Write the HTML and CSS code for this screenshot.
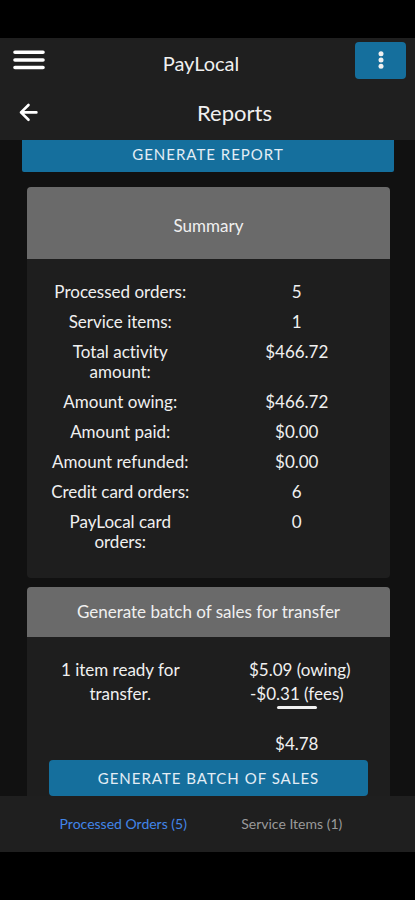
FILE: index.html
```html
<!DOCTYPE html>
<html lang="en">
<head>
<meta charset="utf-8">
<meta name="viewport" content="width=device-width, initial-scale=1">
<title>PayLocal Reports</title>
<link rel="stylesheet" href="styles.css">
</head>
<body>
<div class="app">
  <header class="header">
    <div class="bar">
      <button class="icon-button" type="button" aria-label="Menu">
        <svg width="32" height="20" viewBox="0 0 32 20" fill="none" stroke="currentColor" stroke-width="3.6" stroke-linecap="round"><path d="M2 2.3h28M2 10h28M2 17.5h28"/></svg>
      </button>
      <h1 class="brand">PayLocal</h1>
      <button class="more" type="button" aria-label="More options">
        <svg width="6" height="20" viewBox="0 0 6 20" fill="currentColor"><circle cx="3" cy="3.8" r="2.5"/><circle cx="3" cy="10" r="2.5"/><circle cx="3" cy="16.2" r="2.5"/></svg>
      </button>
    </div>
    <div class="bar page-bar">
      <button class="icon-button back" type="button" aria-label="Back">
        <svg width="20" height="20" viewBox="0 0 20 20" fill="none" stroke="currentColor" stroke-width="2.6" stroke-linecap="round" stroke-linejoin="round"><path d="M17.4 10.4H2M9.5 3 2 10.4l7.5 7.4"/></svg>
      </button>
      <h2 class="page-title">Reports</h2>
    </div>
  </header>

  <main class="content">
    <button class="button report-button" type="button">GENERATE REPORT</button>

    <section class="card">
      <h3 class="card-title tall">Summary</h3>
      <table class="summary">
        <tbody>
          <tr><th scope="row">Processed orders:</th><td>5</td></tr>
          <tr><th scope="row">Service items:</th><td>1</td></tr>
          <tr><th scope="row">Total activity amount:</th><td>$466.72</td></tr>
          <tr><th scope="row">Amount owing:</th><td>$466.72</td></tr>
          <tr><th scope="row">Amount paid:</th><td>$0.00</td></tr>
          <tr><th scope="row">Amount refunded:</th><td>$0.00</td></tr>
          <tr><th scope="row">Credit card orders:</th><td>6</td></tr>
          <tr><th scope="row">PayLocal card orders:</th><td>0</td></tr>
        </tbody>
      </table>
    </section>

    <section class="card">
      <h3 class="card-title">Generate batch of sales for transfer</h3>
      <div class="batch">
        <p class="ready">1 item ready for transfer.</p>
        <div class="amounts">
          <p class="owing">$5.09 (owing)</p>
          <p>-$0.31 (fees)</p>
          <hr class="rule">
          <p>$4.78</p>
        </div>
      </div>
      <button class="button batch-button" type="button">GENERATE BATCH OF SALES</button>
    </section>
  </main>

  <nav class="tabs">
    <a class="tab active" href="#orders">Processed Orders (5)</a>
    <a class="tab" href="#items">Service Items (1)</a>
  </nav>
</div>
</body>
</html>
```
FILE: styles.css
```css
* {
  box-sizing: border-box;
}

body {
  margin: 0;
  background: #000;
  color: #f0f0f0;
  font-family: Lato, "Open Sans", sans-serif;
  font-size: 17px;
  font-variant-ligatures: none;
  line-height: 20px;
}

h1, h2, h3, p {
  margin: 0;
  font-weight: 400;
}

button {
  border: 0;
  padding: 0;
  color: inherit;
  font: inherit;
}

svg {
  display: block;
}

.app {
  display: flex;
  flex-direction: column;
  height: 100vh;
  padding: 38px 0 48px;
}

.header {
  position: relative;
  z-index: 1;
  background: #1f1f1f;
}

.bar {
  display: flex;
  align-items: center;
  height: 46px;
  padding: 0 9px 2px 13px;
}

.page-bar {
  height: 56px;
  padding: 0 9px 0 19px;
}

.icon-button {
  background: none;
  color: #fff;
}

.brand {
  flex: 1;
  padding: 6px 0 0 2px;
  font-size: 20px;
  line-height: 24px;
  text-align: center;
}

.more {
  display: grid;
  place-items: center;
  width: 51px;
  height: 37px;
  border-radius: 4px;
  background: #156f9d;
}

.page-title {
  flex: 1;
  padding: 2px 0 0 24px;
  font-size: 22px;
  line-height: 24px;
  text-align: center;
}

.content {
  flex: 1;
  min-height: 0;
  padding: 0 25px 0 27px;
  overflow: hidden;
  background: #111;
}

.button {
  display: block;
  height: 36px;
  border-radius: 4px;
  background: #156f9d;
  color: #e3edf5;
  font-size: 15px;
  letter-spacing: 1px;
}

.report-button {
  width: calc(100% + 9px);
  margin: -4px -4px 15px -5px;
  border-radius: 2px;
}

.card {
  margin-bottom: 9px;
  border-radius: 4px;
  overflow: hidden;
  background: #1e1e1e;
}

.card-title {
  padding: 15px 8px;
  background: #6a6a6a;
  font-size: 17px;
  text-align: center;
}

.tall {
  padding: 29px 8px 23px;
}

.summary {
  width: calc(100% - 10px);
  margin: 18px 5px 21px;
  border-collapse: collapse;
  table-layout: fixed;
  text-align: center;
}

.summary th,
.summary td {
  padding: 5px 14px;
  font-weight: 400;
  vertical-align: top;
}

.batch {
  display: grid;
  grid-template-columns: 1fr 1fr;
  padding: 21px 5px 0;
  line-height: 24px;
  text-align: center;
}

.ready {
  padding: 0 24px;
}

.owing {
  padding-left: 6px;
}

.rule {
  width: 40px;
  height: 3px;
  margin: 0 auto 23px;
  border: 0;
  border-radius: 2px;
  background: #f0f0f0;
}

.batch-button {
  width: calc(100% - 44px);
  margin: 4px 22px 24px;
}

.tabs {
  display: grid;
  grid-template-columns: 1fr 1fr;
  padding: 0 39px;
  background: #1f1f1f;
  font-size: 14px;
  line-height: 56px;
  text-align: center;
}

.tab {
  color: #9a9a9a;
  text-decoration: none;
}

.active {
  color: #4285e8;
}
```
